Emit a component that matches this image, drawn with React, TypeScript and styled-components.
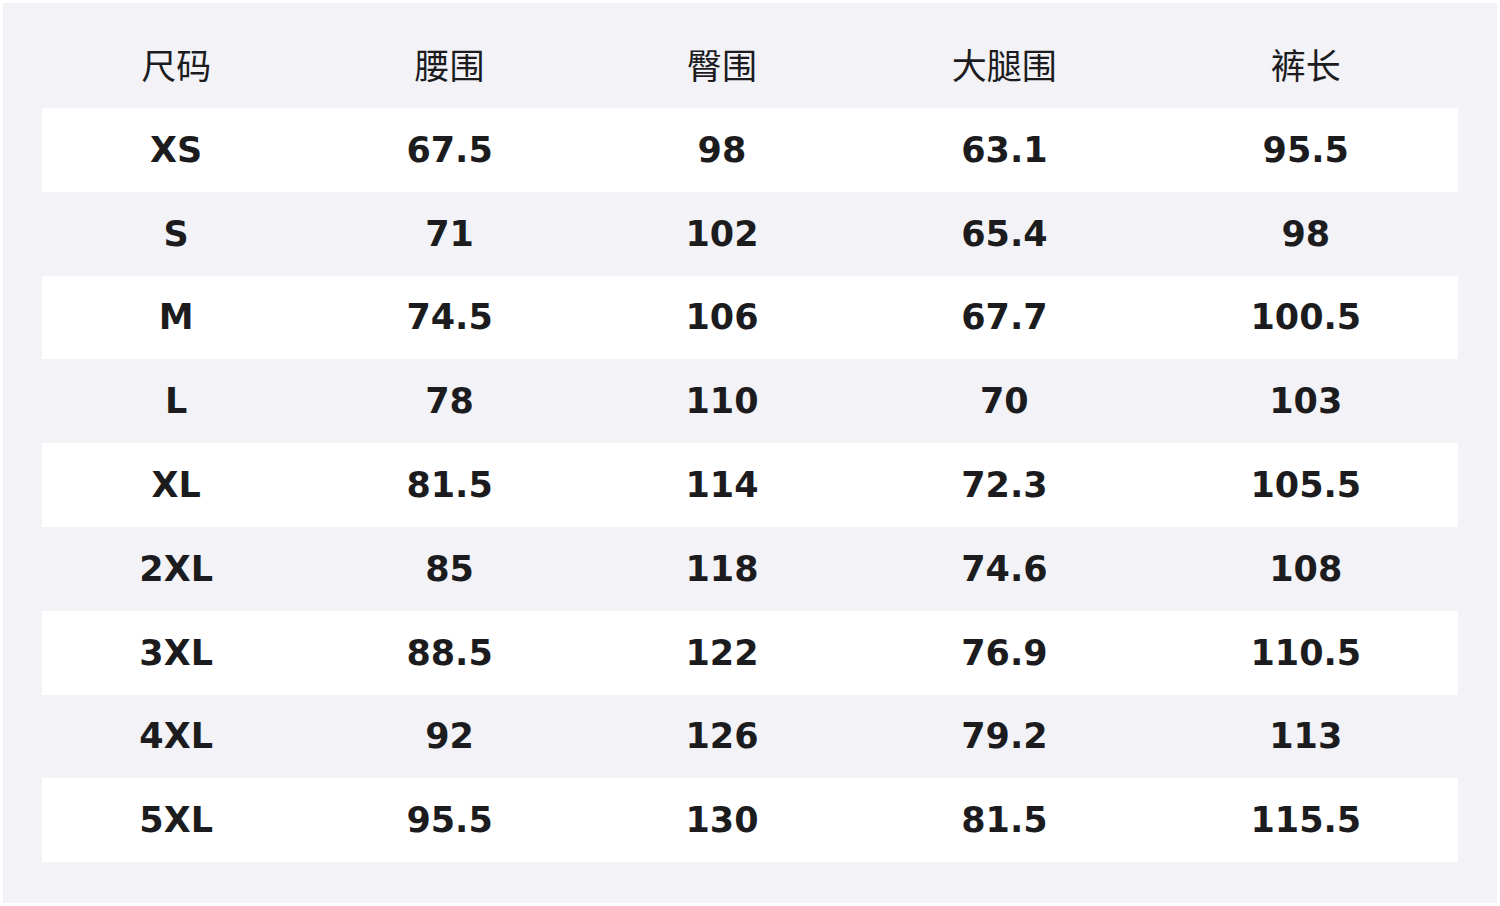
import React from 'react';
import styled, { createGlobalStyle } from 'styled-components';

const GlobalStyle = createGlobalStyle`
  html, body {
    margin: 0;
    padding: 0;
    background: #ffffff;
  }
`;

const Page = styled.div`
  width: 1500px;
  height: 906px;
  padding: 3px;
  box-sizing: border-box;
`;

const Panel = styled.div`
  height: 100%;
  background-color: #f2f2f7;
  padding: 22px 39px 0 39px;
  box-sizing: border-box;
`;

const columns = '268fr 278fr 266fr 298fr 304fr';

const HeaderRow = styled.div`
  display: grid;
  grid-template-columns: ${columns};
  height: 83px;
  padding-bottom: 6px;
  box-sizing: border-box;
  align-items: center;
`;

const HeaderCell = styled.div`
  text-align: center;
  font-family: 'Noto Sans CJK SC', 'Noto Sans', sans-serif;
  font-size: 35px;
  font-weight: 400;
  color: #1c1c1e;
`;

const Row = styled.div<{ striped: boolean }>`
  display: grid;
  grid-template-columns: ${columns};
  height: 83.8px;
  align-items: center;
  background-color: ${(props) => (props.striped ? '#ffffff' : 'transparent')};
`;

const Cell = styled.div`
  text-align: center;
  font-family: 'DejaVu Sans', sans-serif;
  font-size: 35px;
  font-weight: 700;
  color: #1c1c1e;
`;

const headers = ['尺码', '腰围', '臀围', '大腿围', '裤长'];

const sizes = [
  ['XS', '67.5', '98', '63.1', '95.5'],
  ['S', '71', '102', '65.4', '98'],
  ['M', '74.5', '106', '67.7', '100.5'],
  ['L', '78', '110', '70', '103'],
  ['XL', '81.5', '114', '72.3', '105.5'],
  ['2XL', '85', '118', '74.6', '108'],
  ['3XL', '88.5', '122', '76.9', '110.5'],
  ['4XL', '92', '126', '79.2', '113'],
  ['5XL', '95.5', '130', '81.5', '115.5'],
];

const App: React.FC = () => {
  return (
    <>
      <GlobalStyle />
      <Page>
        <Panel>
          <HeaderRow>
            {headers.map((h) => (
              <HeaderCell key={h}>{h}</HeaderCell>
            ))}
          </HeaderRow>
          {sizes.map((row, i) => (
            <Row key={row[0]} striped={i % 2 === 0}>
              {row.map((v, j) => (
                <Cell key={j}>{v}</Cell>
              ))}
            </Row>
          ))}
        </Panel>
      </Page>
    </>
  );
};

export default App;
